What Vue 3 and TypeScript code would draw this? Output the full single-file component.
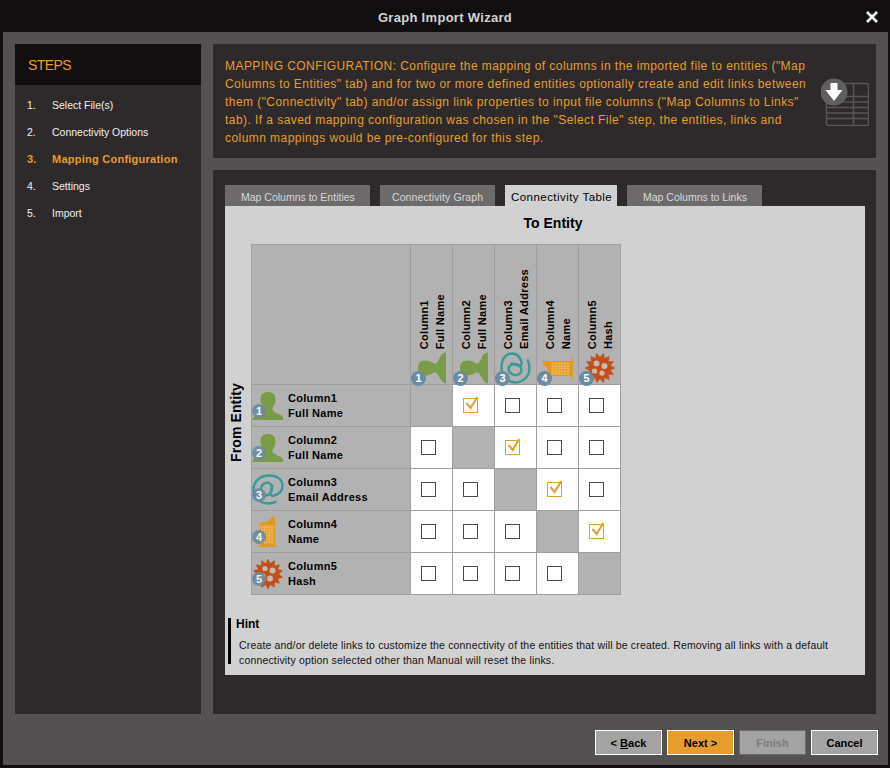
<script setup lang="ts">
type Kind = 'person' | 'at' | 'building' | 'gear'

const steps = ['Select File(s)', 'Connectivity Options', 'Mapping Configuration', 'Settings', 'Import']
const tabs = ['Map Columns to Entities', 'Connectivity Graph', 'Connectivity Table', 'Map Columns to Links']
const entities: { name: string; label: string; kind: Kind }[] = [
  { name: 'Column1', label: 'Full Name', kind: 'person' },
  { name: 'Column2', label: 'Full Name', kind: 'person' },
  { name: 'Column3', label: 'Email Address', kind: 'at' },
  { name: 'Column4', label: 'Name', kind: 'building' },
  { name: 'Column5', label: 'Hash', kind: 'gear' },
]
const checked: Record<number, number> = { 0: 1, 1: 2, 2: 3, 3: 4 }

// spiky disc for the hash icon
const spikes = 14
const gearPath = Array.from({ length: spikes * 2 }, (_, i) => {
  const a = (i * Math.PI) / spikes
  const r = i % 2 === 0 ? 15.5 : 11
  return `${(16 + r * Math.sin(a)).toFixed(1)} ${(16 - r * Math.cos(a)).toFixed(1)}`
}).join('L')
</script>

<template>
  <div class="wizard">
    <header class="title">
      <span>Graph Import Wizard</span>
      <svg class="close" width="14" height="14" viewBox="0 0 14 14">
        <path d="M2 2 L12 12 M12 2 L2 12" stroke="#fff" stroke-width="2.6" />
      </svg>
    </header>

    <div class="body">
      <div class="main">
        <aside class="steps">
          <h2>STEPS</h2>
          <ol>
            <li v-for="(s, i) in steps" :key="s" :class="{ on: i === 2 }">
              <span class="n">{{ i + 1 }}.</span>{{ s }}
            </li>
          </ol>
        </aside>

        <div class="right">
          <section class="desc">
            <p>MAPPING CONFIGURATION: Configure the mapping of columns in the imported file to entities ("Map Columns to Entities" tab) and for two or more defined entities optionally create and edit links between them ("Connectivity" tab) and/or assign link properties to input file columns ("Map Columns to Links" tab). If a saved mapping configuration was chosen in the "Select File" step, the entities, links and column mappings would be pre-configured for this step.</p>
            <svg class="import-icon" width="48" height="48" viewBox="0 0 48 48">
              <g fill="none" stroke="#565455" stroke-width="1.5">
                <rect x="5.500" y="5.500" width="42" height="42" rx="2" />
                <path d="M5.500 18.500H47.500M5.500 24H47.500M5.500 29.500H47.500M5.500 35H47.500M5.500 40.500H47.500M32.500 5.500V47.500" />
              </g>
              <circle cx="13" cy="14" r="13.500" fill="#605e5f" />
              <path d="M9.500 5H16.500V12H21.500L13 23L4.500 12H9.500Z" fill="#fff" />
            </svg>
          </section>

          <section class="content">
            <nav class="tabs">
              <span v-for="(t, i) in tabs" :key="t" class="tab" :class="{ active: i === 2 }">{{ t }}</span>
            </nav>
            <div class="pane">
              <div class="to">To Entity</div>
              <div class="matrix">
                <div class="from"><span>From Entity</span></div>
                <table>
                  <thead>
                    <tr>
                      <th class="corner"></th>
                      <th v-for="(e, c) in entities" :key="c" class="colhead">
                        <div class="vtext"><span>{{ e.label }}</span><span>{{ e.name }}</span></div>
                        <div class="hicon">
                          <svg class="rot" width="40" height="40" viewBox="0 0 32 32">
                            <use :href="'#ic-' + e.kind" />
                          </svg>
                          <b class="badge">{{ c + 1 }}</b>
                        </div>
                      </th>
                    </tr>
                  </thead>
                  <tbody>
                    <tr v-for="(e, r) in entities" :key="r">
                      <th class="rowhead">
                        <div class="rowin">
                          <div class="ricon">
                            <svg width="32" height="32" viewBox="0 0 32 32">
                              <use :href="'#ic-' + e.kind" />
                            </svg>
                            <b class="badge">{{ r + 1 }}</b>
                          </div>
                          <div class="rlabel">{{ e.name }}<br />{{ e.label }}</div>
                        </div>
                      </th>
                      <template v-for="(_, c) in entities" :key="c">
                        <td v-if="c === r" class="self"></td>
                        <td v-else class="cell">
                          <span class="box" :class="{ sel: checked[r] === c }">
                            <svg v-if="checked[r] === c" width="15" height="15" viewBox="0 0 15 15">
                              <path d="M2.500 5L6.600 10L13.300 -1" fill="none" stroke="#e69d2b" stroke-width="2" />
                            </svg>
                          </span>
                        </td>
                      </template>
                    </tr>
                  </tbody>
                </table>
              </div>
              <div class="hint">
                <h4>Hint</h4>
                <p>Create and/or delete links to customize the connectivity of the entities that will be created. Removing all links with a default connectivity option selected other than Manual will reset the links.</p>
              </div>
            </div>
          </section>
        </div>
      </div>

      <footer class="actions">
        <button class="btn"><span>&lt; <u>B</u>ack</span></button>
        <button class="btn next">Next &gt;</button>
        <button class="btn off">Finish</button>
        <button class="btn">Cancel</button>
      </footer>
    </div>

    <svg width="0" height="0" class="defs">
      <symbol id="ic-person" viewBox="0 0 32 32">
        <path fill="#7a9b48" d="M16 2C21 2 24 5 23.500 10C23.300 13 22 16 20.500 18V20C23 23 28 24 30 26C31 27 31.500 28.500 31.500 30H.5C.5 28.500 1.500 27 3 26C5 24 9 23 11.500 20V18C10 16 8.700 13 8.500 10C8 5 11 2 16 2Z" />
      </symbol>
      <symbol id="ic-at" viewBox="0 0 32 32">
        <g fill="none" stroke="#369b99" stroke-width="2.400">
          <path d="M20.500 10.500L18.500 19.500C18.200 21.500 20 22 22 21.500C27 20 30.500 16.500 30.500 12C30.500 5 24.500 1.500 17 1.500C8 1.500 1.500 7.500 1.500 15.500C1.500 24 8.500 29.500 16 29.500C19 29.500 22 29 24.500 27.500" />
          <ellipse cx="14.500" cy="15" rx="5.500" ry="6.500" transform="rotate(20 14.500 15)" />
        </g>
      </symbol>
      <symbol id="ic-building" viewBox="0 0 32 32">
        <path fill="#e09a24" d="M8 30V7L17 5V3L23 0V30H26V31H5V30Z" />
        <path stroke="#f0bd6a" stroke-width=".8" fill="none" d="M10 9V28M12.500 9V28M15 9V28M17.500 9V28M20 9V28M9 11H22M9 14H22M9 17H22M9 20H22M9 23H22M9 26H22" />
      </symbol>
      <symbol id="ic-gear" viewBox="0 0 32 32">
        <path fill="#c2501d" :d="'M' + gearPath + 'Z'" />
        <circle cx="13" cy="10.500" r="2.600" fill="#c9b8ac" />
        <circle cx="20.500" cy="12.500" r="3" fill="#c9b8ac" />
        <circle cx="11" cy="18" r="2.600" fill="#c9b8ac" />
        <circle cx="18" cy="20.500" r="3" fill="#c9b8ac" />
      </symbol>
    </svg>
  </div>
</template>

<style>
html, body { margin: 0; background: #fff; }
</style>

<style scoped>
.wizard {
  width: 890px;
  height: 768px;
  background: #110e0f;
  font-family: "Liberation Sans", Arial, sans-serif;
  display: flex;
  flex-direction: column;
  overflow: hidden;
}
.defs { position: absolute; }
.title {
  height: 32px;
  flex: none;
  display: flex;
  align-items: center;
  justify-content: center;
  position: relative;
  color: #d4d4d4;
  font-size: 13px;
  font-weight: bold;
  letter-spacing: 0.3px;
  padding-top: 2px;
  box-sizing: border-box;
}
.close { position: absolute; right: 11px; top: 10px; }
.body {
  height: 733px;
  margin: 0 2px 0 3px;
  background: #535152;
  padding: 12px 12px 0;
  box-sizing: border-box;
  display: flex;
  flex-direction: column;
}
.main { display: flex; gap: 12px; height: 670px; flex: none; }
.steps { width: 186px; flex: none; background: #2e2a2b; }
.steps h2 {
  margin: 0;
  height: 41px;
  line-height: 42px;
  background: #110e0f;
  color: #e69d2b;
  font-size: 14px;
  font-weight: normal;
  padding-left: 13px;
  letter-spacing: -0.6px;
}
.steps ol { list-style: none; margin: 0; padding: 7px 0 0 12px; }
.steps li { height: 27px; line-height: 27px; font-size: 10.5px; color: #f0f0f0; }
.steps li .n { display: inline-block; width: 25px; }
.steps li.on { color: #e69d2b; font-weight: bold; font-size: 11px; letter-spacing: 0.25px; }
.right { flex: none; width: 663px; display: flex; flex-direction: column; gap: 12px; }
.desc {
  height: 114px;
  flex: none;
  background: #2e2a2b;
  position: relative;
  padding: 13px 12px 0;
  box-sizing: border-box;
}
.desc p {
  margin: 0;
  width: 590px;
  color: #e69d2b;
  font-size: 12px;
  line-height: 18px;
  letter-spacing: 0.44px;
}
.import-icon { position: absolute; left: 608px; top: 34px; }
.content { flex: 1; background: #2e2a2b; padding: 15px 11px 0 12px; }
.tabs { display: flex; gap: 10px; height: 21px; }
.tab {
  height: 21px;
  line-height: 24px;
  background: #6d6a6b;
  color: #d8d8d8;
  font-size: 10.5px;
  padding: 0 16px;
  box-sizing: border-box;
  white-space: nowrap;
}
.tab:nth-child(1) { width: 145px; }
.tab:nth-child(2) { width: 115px; padding: 0 12px; letter-spacing: 0.1px; }
.tab:nth-child(3) { width: 112px; padding: 0 6px; }
.tab:nth-child(4) { width: 135px; }
.tab.active { background: #d1d1d1; color: #000; font-size: 11.5px; letter-spacing: 0.45px; }
.pane { background: #d1d1d1; height: 469px; padding-top: 1px; box-sizing: border-box; }
.to {
  text-align: center;
  font-size: 14px;
  font-weight: bold;
  color: #000;
  height: 37px;
  line-height: 33px;
  width: 656px;
}
.matrix { display: flex; margin-left: 26px; position: relative; }
.from {
  position: absolute;
  left: -28px;
  top: 138px;
  width: 25px;
  height: 80px;
  display: flex;
  align-items: center;
  justify-content: center;
}
.from span {
  writing-mode: vertical-rl;
  transform: rotate(180deg);
  font-size: 14px;
  font-weight: bold;
  letter-spacing: 0.1px;
  color: #000;
  white-space: nowrap;
}
table {
  border-collapse: collapse;
  table-layout: fixed;
  width: 370px;
  height: 350px;
}
th, td { border: 1px solid #9f9f9f; padding: 0; }
.corner { width: 158px; background: #b2b2b2; }
.colhead { width: 41px; height: 139px; background: #b2b2b2; position: relative; vertical-align: bottom; }
.vtext {
  position: absolute;
  left: 0;
  right: 0;
  bottom: 35px;
  display: flex;
  flex-direction: row-reverse;
  justify-content: center;
  align-items: flex-end;
}
.vtext span {
  writing-mode: vertical-rl;
  transform: rotate(180deg);
  font-size: 11px;
  font-weight: bold;
  letter-spacing: 0.3px;
  line-height: 16px;
  color: #000;
  white-space: nowrap;
}
.hicon { position: absolute; left: 0; bottom: 0; width: 41px; height: 32px; z-index: 1; }
.hicon .rot { position: absolute; left: 1px; top: -4px; transform: rotate(-90deg) scale(.8); }
.badge {
  position: absolute;
  left: 0;
  bottom: 0;
  width: 15px;
  height: 15px;
  line-height: 15px;
  border-radius: 50%;
  background: #6c8ba0;
  color: #fff;
  font-size: 11px;
  text-align: center;
  font-weight: bold;
}
.hicon .badge { bottom: -2px; }
.rowhead { background: #b2b2b2; height: 41px; }
.rowin { display: flex; align-items: center; height: 41px; position: relative; }
.ricon { position: relative; width: 32px; height: 32px; margin-right: 4px; }
.ricon svg { display: block; }
.ricon .badge { left: 0; bottom: 4px; width: 14px; height: 14px; line-height: 14px; opacity: .9; }
.rlabel {
  text-align: left;
  font-size: 11px;
  line-height: 15px;
  font-weight: bold;
  color: #000;
  letter-spacing: 0.3px;
}
.self { background: #b2b2b2; }
.cell { background: #fff; text-align: center; vertical-align: middle; }
.box {
  display: inline-block;
  width: 13px;
  height: 13px;
  border: 1px solid #4c4c4c;
  box-sizing: content-box;
  vertical-align: middle;
  position: relative;
  left: -3px;
  top: -1px;
}
.box.sel { border-color: #e69d2b; }
.box svg { position: absolute; left: 0; top: -1px; overflow: visible; }
.hint {
  margin: 24px 0 0 3px;
  border-left: 3px solid #000;
  height: 46px;
  padding-left: 5px;
  width: 625px;
  position: relative;
}
.hint h4 { margin: -1px 0 0; font-size: 12px; line-height: 13px; color: #000; }
.hint p { margin: 7px 0 0 3px; font-size: 10.5px; line-height: 15px; color: #111; letter-spacing: 0.165px; }
.actions {
  flex: 1;
  display: flex;
  justify-content: flex-end;
  gap: 5px;
  padding: 16px 0 0;
  margin-right: -2px;
}
.btn {
  width: 67px;
  height: 25px;
  background: #a3a3a3;
  border: 1px solid #fff;
  color: #000;
  font-family: inherit;
  font-size: 11px;
  font-weight: bold;
  padding: 0;
  box-sizing: border-box;
}
.btn.next { background: #e69d2b; }
.btn.off { background: #a3a3a3; border-color: #6d6a6b; color: #7f7f7f; }
</style>
